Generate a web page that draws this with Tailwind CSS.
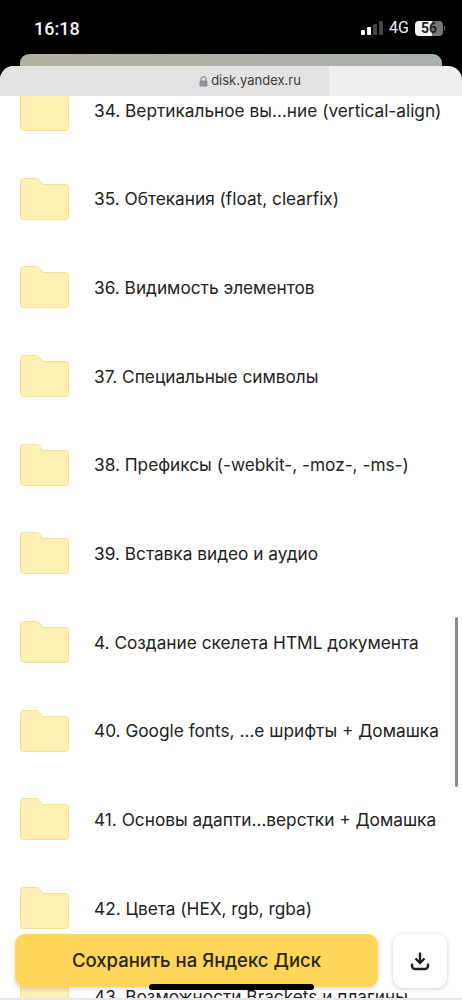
<!DOCTYPE html>
<html lang="ru">
<head>
<meta charset="UTF-8">
<title>disk.yandex.ru</title>
<script src="https://cdn.jsdelivr.net/npm/@tailwindcss/browser@4"></script>
</head>
<body class="bg-white font-['Inter','Liberation_Sans',sans-serif]">
<div class="relative w-[462px] h-[1000px] overflow-hidden bg-white">

  <!-- status bar + browser chrome -->
  <div class="relative z-10 h-[96px] bg-black">
    <div class="flex items-center justify-between h-[54px] pl-[34px] pr-[17px] pt-[2px]">
      <span class="text-[18px] font-medium text-[#f4f4f4] font-['Roboto',sans-serif]">16:18</span>
      <div class="flex items-center gap-[6px]">
        <div class="flex items-end gap-[2px] h-[14px]">
          <span class="w-[4px] h-[5px] rounded-[1px] bg-white"></span>
          <span class="w-[4px] h-[8px] rounded-[1px] bg-white"></span>
          <span class="w-[4px] h-[11px] rounded-[1px] bg-[#444]"></span>
          <span class="w-[4px] h-[14px] rounded-[1px] bg-[#444]"></span>
        </div>
        <span class="text-[16px] text-[#eee] font-['Roboto',sans-serif]">4G</span>
        <div class="flex items-center gap-[1px]">
          <div class="w-[28px] h-[15px] rounded-[4px] bg-[linear-gradient(90deg,#f2f2f2_62%,#777_62%)] flex items-center justify-center text-[14px] font-bold text-[#222] font-['Roboto',sans-serif]">56</div>
          <span class="w-[1px] h-[5px] bg-[#666]"></span>
        </div>
      </div>
    </div>
    <div class="mx-[20px] h-[12px] rounded-t-[9px] bg-[linear-gradient(90deg,#b3b1a2,#aab1ae)]"></div>
    <div class="flex h-[30px] rounded-t-[14px] overflow-hidden bg-[#efefef] relative">
      <div class="w-[329px] bg-[#e2e2e2]"></div>
      <div class="absolute inset-0 flex items-center justify-center gap-[3px] pl-[38px]">
        <svg width="9" height="11" viewBox="0 0 9 11"><path d="M2 5V3.3a2.500 2.500 0 0 1 5 0V5" fill="none" stroke="#8f8f98" stroke-width="1.200"/><rect x="0.500" y="4.600" width="8" height="6" rx="1.400" fill="#8f8f98"/></svg>
        <span class="text-[13px] text-[#3c3c3c]">disk.yandex.ru</span>
      </div>
    </div>
  </div>

  <!-- folder list -->
  <div class="mt-[-30.4px] text-[17.25px] text-[#222]">
    <div class="flex items-center h-[88.7px] pl-[20px] gap-[25px]"><svg width="49" height="42" viewBox="0 0 49 42"><path d="M3.500.5h13c1.500 0 2.200.6 3.200 2l1.800 2.500c.7 1 1.300 1.500 2.500 1.500H45.500a3 3 0 0 1 3 3v29a3 3 0 0 1-3 3h-42a3 3 0 0 1-3-3v-35a3 3 0 0 1 3-3z" fill="#fdf0b4" stroke="#f8e08a"/></svg><span class="pt-[1px]">34. Вертикальное вы…ние (vertical-align)</span></div>
    <div class="flex items-center h-[88.7px] pl-[20px] gap-[25px]"><svg width="49" height="42" viewBox="0 0 49 42"><path d="M3.500.5h13c1.500 0 2.200.6 3.200 2l1.800 2.500c.7 1 1.300 1.500 2.500 1.500H45.500a3 3 0 0 1 3 3v29a3 3 0 0 1-3 3h-42a3 3 0 0 1-3-3v-35a3 3 0 0 1 3-3z" fill="#fdf0b4" stroke="#f8e08a"/></svg><span class="pt-[1px]">35. Обтекания (float, clearfix)</span></div>
    <div class="flex items-center h-[88.7px] pl-[20px] gap-[25px]"><svg width="49" height="42" viewBox="0 0 49 42"><path d="M3.500.5h13c1.500 0 2.200.6 3.200 2l1.800 2.500c.7 1 1.300 1.500 2.500 1.500H45.500a3 3 0 0 1 3 3v29a3 3 0 0 1-3 3h-42a3 3 0 0 1-3-3v-35a3 3 0 0 1 3-3z" fill="#fdf0b4" stroke="#f8e08a"/></svg><span class="pt-[1px]">36. Видимость элементов</span></div>
    <div class="flex items-center h-[88.7px] pl-[20px] gap-[25px]"><svg width="49" height="42" viewBox="0 0 49 42"><path d="M3.500.5h13c1.500 0 2.200.6 3.200 2l1.800 2.500c.7 1 1.300 1.500 2.500 1.500H45.500a3 3 0 0 1 3 3v29a3 3 0 0 1-3 3h-42a3 3 0 0 1-3-3v-35a3 3 0 0 1 3-3z" fill="#fdf0b4" stroke="#f8e08a"/></svg><span class="pt-[1px]">37. Специальные символы</span></div>
    <div class="flex items-center h-[88.7px] pl-[20px] gap-[25px]"><svg width="49" height="42" viewBox="0 0 49 42"><path d="M3.500.5h13c1.500 0 2.200.6 3.200 2l1.800 2.500c.7 1 1.300 1.500 2.500 1.500H45.500a3 3 0 0 1 3 3v29a3 3 0 0 1-3 3h-42a3 3 0 0 1-3-3v-35a3 3 0 0 1 3-3z" fill="#fdf0b4" stroke="#f8e08a"/></svg><span class="pt-[1px]">38. Префиксы (-webkit-, -moz-, -ms-)</span></div>
    <div class="flex items-center h-[88.7px] pl-[20px] gap-[25px]"><svg width="49" height="42" viewBox="0 0 49 42"><path d="M3.500.5h13c1.500 0 2.200.6 3.200 2l1.800 2.500c.7 1 1.300 1.500 2.500 1.500H45.500a3 3 0 0 1 3 3v29a3 3 0 0 1-3 3h-42a3 3 0 0 1-3-3v-35a3 3 0 0 1 3-3z" fill="#fdf0b4" stroke="#f8e08a"/></svg><span class="pt-[1px]">39. Вставка видео и аудио</span></div>
    <div class="flex items-center h-[88.7px] pl-[20px] gap-[25px]"><svg width="49" height="42" viewBox="0 0 49 42"><path d="M3.500.5h13c1.500 0 2.200.6 3.200 2l1.800 2.500c.7 1 1.300 1.500 2.500 1.500H45.500a3 3 0 0 1 3 3v29a3 3 0 0 1-3 3h-42a3 3 0 0 1-3-3v-35a3 3 0 0 1 3-3z" fill="#fdf0b4" stroke="#f8e08a"/></svg><span class="pt-[1px]">4. Создание скелета HTML документа</span></div>
    <div class="flex items-center h-[88.7px] pl-[20px] gap-[25px]"><svg width="49" height="42" viewBox="0 0 49 42"><path d="M3.500.5h13c1.500 0 2.200.6 3.200 2l1.800 2.500c.7 1 1.300 1.500 2.500 1.500H45.500a3 3 0 0 1 3 3v29a3 3 0 0 1-3 3h-42a3 3 0 0 1-3-3v-35a3 3 0 0 1 3-3z" fill="#fdf0b4" stroke="#f8e08a"/></svg><span class="pt-[1px]">40. Google fonts, …е шрифты + Домашка</span></div>
    <div class="flex items-center h-[88.7px] pl-[20px] gap-[25px]"><svg width="49" height="42" viewBox="0 0 49 42"><path d="M3.500.5h13c1.500 0 2.200.6 3.200 2l1.800 2.500c.7 1 1.300 1.500 2.500 1.500H45.500a3 3 0 0 1 3 3v29a3 3 0 0 1-3 3h-42a3 3 0 0 1-3-3v-35a3 3 0 0 1 3-3z" fill="#fdf0b4" stroke="#f8e08a"/></svg><span class="pt-[1px]">41. Основы адапти…верстки + Домашка</span></div>
    <div class="flex items-center h-[88.7px] pl-[20px] gap-[25px]"><svg width="49" height="42" viewBox="0 0 49 42"><path d="M3.500.5h13c1.500 0 2.200.6 3.200 2l1.800 2.500c.7 1 1.300 1.500 2.500 1.500H45.500a3 3 0 0 1 3 3v29a3 3 0 0 1-3 3h-42a3 3 0 0 1-3-3v-35a3 3 0 0 1 3-3z" fill="#fdf0b4" stroke="#f8e08a"/></svg><span class="pt-[1px]">42. Цвета (HEX, rgb, rgba)</span></div>
    <div class="flex items-center h-[88.7px] pl-[20px] gap-[25px]"><svg width="49" height="42" viewBox="0 0 49 42"><path d="M3.500.5h13c1.500 0 2.200.6 3.200 2l1.800 2.500c.7 1 1.300 1.500 2.500 1.500H45.500a3 3 0 0 1 3 3v29a3 3 0 0 1-3 3h-42a3 3 0 0 1-3-3v-35a3 3 0 0 1 3-3z" fill="#fdf0b4" stroke="#f8e08a"/></svg><span class="pt-[1px]">43. Возможности Brackets и плагины</span></div>
  </div>

  <!-- scrollbar -->
  <div class="absolute left-[455px] top-[617px] w-[3px] h-[170px] rounded-full bg-[#8a8a8a]"></div>

  <!-- bottom actions -->
  <div class="absolute left-[15px] top-[934px] flex gap-[15px]">
    <div class="w-[363px] h-[53px] rounded-[10px] bg-[#ffd659] shadow-[0_2px_5px_rgba(0,0,0,0.15)] flex items-center justify-center text-[18.5px] font-medium text-[#2a2410]">Сохранить на Яндекс Диск</div>
    <div class="w-[54px] h-[54px] rounded-[10px] bg-white shadow-[0_1px_4px_rgba(0,0,0,0.2)] flex items-center justify-center">
      <svg width="20" height="20" viewBox="0 0 20 20" fill="none" stroke="#1f1f1f" stroke-width="2.400"><path d="M10 1.500v10M5.500 7.500l4.500 4.500 4.500-4.500"/><path d="M2 12.500v2.500a3 3 0 0 0 3 3h10a3 3 0 0 0 3-3v-2.500"/></svg>
    </div>
  </div>

  <!-- home indicator -->
  <div class="absolute left-[149px] top-[984px] w-[165px] h-[6px] rounded-full bg-black"></div>
  <div class="absolute left-0 bottom-0 w-full h-[2px] bg-[#e8e8e8]"></div>
</div>
</body>
</html>
